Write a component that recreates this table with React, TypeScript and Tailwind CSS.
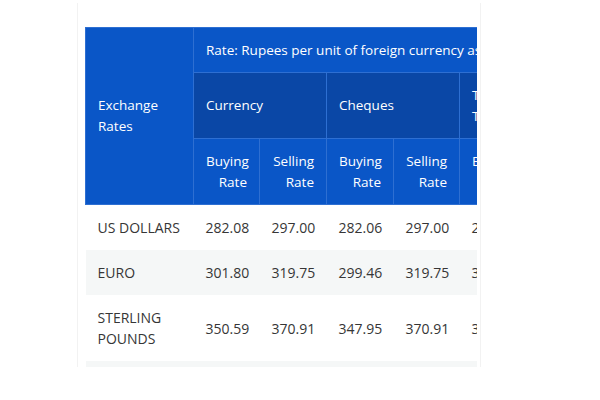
import React from "react";

const rows = [
  { name: "US DOLLARS", v: ["282.08", "297.00", "282.06", "297.00", "287.54", "297.00"], alt: false },
  { name: "EURO", v: ["301.80", "319.75", "299.46", "319.75", "307.12", "319.75"], alt: true },
  { name: "STERLING POUNDS", v: ["350.59", "370.91", "347.95", "370.91", "356.47", "370.91"], alt: false },
  { name: "JAPANESE YEN", v: ["2.09", "2.21", "2.07", "2.21", "2.12", "2.21"], alt: true },
];

export default function App() {
  const h = "border border-[#2e6fd2] px-3 py-[11.5px] font-medium align-middle";
  return (
    <div
      className="w-[600px] h-[400px] bg-white overflow-hidden"
      style={{ fontFamily: '"Open Sans", "Noto Sans", sans-serif' }}
    >
      <div className="ml-[77px] mt-[3px] w-[404px] h-[364px] border-x border-[#f2f2f2] pl-[7px] pt-[24px] overflow-hidden">
        <div className="w-[392px] h-[340px] overflow-hidden">
          <table className="table-fixed border-collapse w-[506px] text-[13.5px] leading-[21px]">
            <colgroup>
              <col className="w-[108px]" />
              <col className="w-[66px]" />
              <col className="w-[67px]" />
              <col className="w-[67px]" />
              <col className="w-[66px]" />
              <col className="w-[66px]" />
              <col className="w-[66px]" />
            </colgroup>
            <thead className="text-white">
              <tr className="bg-[#0a56c7]">
                <th rowSpan={3} className={`${h} text-left`}>
                  Exchange Rates
                </th>
                <th colSpan={6} className={`${h} text-left whitespace-nowrap`}>
                  Rate: Rupees per unit of foreign currency as at 12.05.2023
                </th>
              </tr>
              <tr className="bg-[#0a47a6]">
                <th colSpan={2} className={`${h} text-left h-[66px]`}>Currency</th>
                <th colSpan={2} className={`${h} text-left`}>Cheques</th>
                <th colSpan={2} className={`${h} text-left`}>Telegraphic Transfers</th>
              </tr>
              <tr className="bg-[#0a56c7]">
                {["Buying Rate", "Selling Rate", "Buying Rate", "Selling Rate", "Buying Rate", "Selling Rate"].map((t, i) => (
                  <th key={i} className={`${h} text-right`}>
                    {t}
                  </th>
                ))}
              </tr>
            </thead>
            <tbody className="text-[#363636] text-[14px]">
              {rows.map((r) => (
                <tr key={r.name} className={r.alt ? "bg-[#f5f7f7]" : "bg-white"}>
                  <td className="px-3 py-3 align-middle">{r.name}</td>
                  {r.v.map((x, i) => (
                    <td key={i} className="px-3 py-3 align-middle">
                      {x}
                    </td>
                  ))}
                </tr>
              ))}
            </tbody>
          </table>
        </div>
      </div>
    </div>
  );
}
